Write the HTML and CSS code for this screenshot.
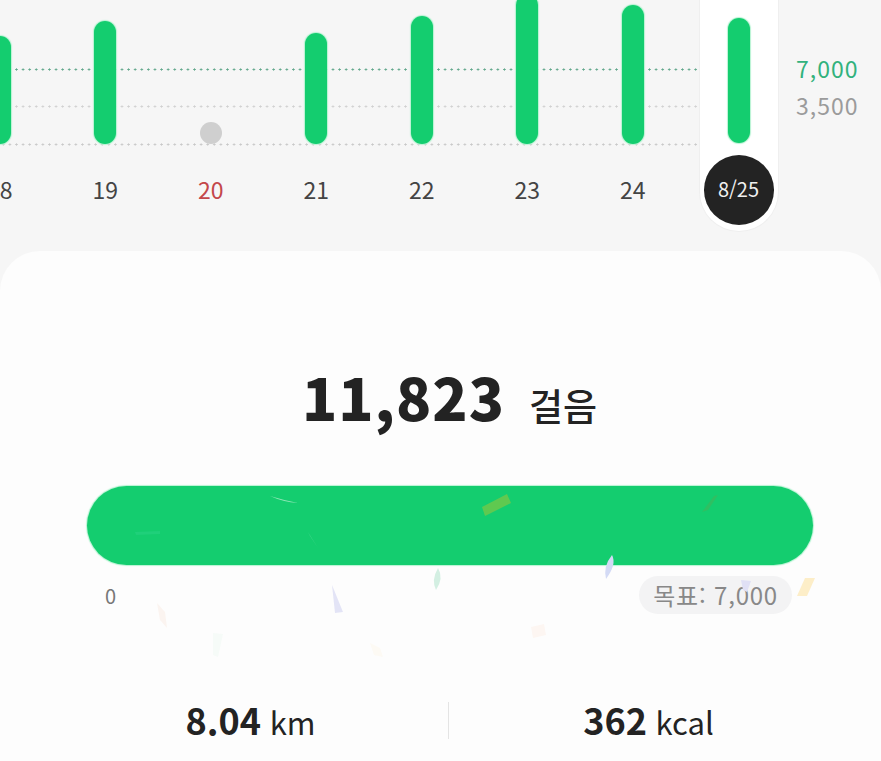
FILE: index.html
```html
<!DOCTYPE html>
<html lang="ko">
<head>
    <meta charset="utf-8" />
    <meta name="viewport" content="width=device-width,initial-scale=1.0" />
    <title>걸음</title>
    <link rel="stylesheet" href="styles.css">
</head>
<body>
    <div class="chart">
        <i class="line line-goal"></i>
        <i class="line line-half"></i>
        <i class="line line-base"></i>
        <div class="days">
            <div class="day"><div class="track"><b class="bar h108"></b></div><span class="date">18</span></div>
            <div class="day"><div class="track"><b class="bar h123"></b></div><span class="date">19</span></div>
            <div class="day"><div class="track"><b class="bar dot"></b></div><span class="date red">20</span></div>
            <div class="day"><div class="track"><b class="bar h111"></b></div><span class="date">21</span></div>
            <div class="day"><div class="track"><b class="bar h128"></b></div><span class="date">22</span></div>
            <div class="day"><div class="track"><b class="bar h150"></b></div><span class="date">23</span></div>
            <div class="day"><div class="track"><b class="bar h139"></b></div><span class="date">24</span></div>
            <div class="day today"><div class="track"><b class="bar h125"></b></div><span class="date">8/25</span></div>
        </div>
        <div class="scale">
            <span class="goal">7,000</span>
            <span>3,500</span>
        </div>
    </div>

    <div class="sheet">
        <h1 class="total"><strong>11,823</strong> <span>걸음</span></h1>
        <div class="progress"></div>
        <div class="limits">
            <span class="zero">0</span>
            <span class="target">목표: 7,000</span>
        </div>
        <div class="stats">
            <div class="stat"><strong>8.04</strong> km</div>
            <div class="stat stat-right"><strong>362</strong> kcal</div>
        </div>

        <!-- 축하 종이 조각 -->
        <svg class="confetti" viewBox="0 251 881 510" aria-hidden="true">
            <path d="M270 496Q283 502 298 503Q283 500 270 496Z" fill="#8fe6b6" />
            <path d="M135 532L160 531L160 534L136 535Z" fill="#1fd07a" />
            <path d="M308 532L318 548L310 536Z" fill="#45d78d" />
            <polygon points="482,507 507,494 511,503 485,516" fill="#5fc950" />
            <path d="M702 512L714 496L718 495L708 510Z" fill="#2fbf62" />
            <path d="M438 568Q444 578 436 590Q431 580 438 568Z" fill="#d3efe2" />
            <polygon points="332,585 343,612 335,613" fill="#e3e4f6" />
            <path d="M157 603L165 612L167 628L160 620Z" fill="#fbf4f0" />
            <path d="M213 633L223 634L218 657L213 655Z" fill="#f6fbf8" />
            <path d="M370 643L380 648L383 657L374 655Z" fill="#fdfaf4" />
            <path d="M612 555Q617 564 606 579Q603 566 612 555Z" fill="#d3daf5" />
            <polygon points="741,580 751,581 747,592 743,590" fill="#e0e0f5" />
            <polygon points="797,596 805,578 815,578 807,596" fill="#fdeec8" />
            <path d="M531 627L544 624L546 635L533 638Z" fill="#fdf6f2" />
        </svg>
    </div>
</body>
</html>
```

FILE: styles.css
```css
* {
    padding: 0;
    margin: 0;
    box-sizing: border-box;
}

html,
body {
    height: 100%;
    overflow: hidden;
}

body {
    background: #f6f6f6;
    font-family: "Noto Sans CJK KR", "Noto Sans", sans-serif;
    color: #232323;
}

.chart {
    position: relative;
    height: 251px;
    display: flex;
    overflow: hidden;
}

/* dotted guide lines behind the bars */
.line {
    position: absolute;
    left: 0;
    width: 698px;
    height: 3px;
    background-size: 6.6px 3px;
}

.line-goal {
    top: 68px;
    background-image: radial-gradient(circle, #5fa68a 0.9px, transparent 1.2px);
}

.line-half {
    top: 105px;
    background-image: radial-gradient(circle, #d0d0d0 0.9px, transparent 1.2px);
}

.line-base {
    top: 143px;
    background-image: radial-gradient(circle, #c8c8c8 0.9px, transparent 1.2px);
}

.days {
    display: flex;
    flex: none;
    width: 844px;
    margin-left: -53px;
}

.day {
    position: relative;
    flex: 0 0 105.5px;
    display: flex;
    flex-direction: column;
    align-items: center;
}

.track {
    height: 144px;
    display: flex;
    align-items: flex-end;
}

.bar {
    display: block;
    width: 22px;
    border-radius: 11px;
    background: #14cd6f;
    box-shadow: 0 0 1px 1px #b6f3d2;
}

.h108 { height: 108px; }
.h111 { height: 111px; }
.h123 { height: 123px; }
.h125 { height: 125px; }
.h128 { height: 128px; }
.h139 { height: 139px; }
.h150 { height: 150px; }

.bar.dot {
    height: 22px;
    background: #cfcfcf;
    box-shadow: none;
}

.date {
    margin-top: 30px;
    line-height: 30px;
    font-size: 23px;
    color: #444;
}

.date.red {
    color: #c4474a;
}

.day.today {
    flex: 0 0 80px;
    height: 232px;
    margin: 0 13px;
    padding-bottom: 6px;
    background: #fff;
    border: 1px solid #efefef;
    border-top: none;
    border-radius: 0 0 40px 40px;
}

.day.today .date {
    width: 70px;
    height: 70px;
    margin-top: 12px;
    border-radius: 50%;
    background: #232323;
    color: #f0f0f0;
    font-size: 20px;
    line-height: 68px;
    text-align: center;
}

.scale {
    display: flex;
    flex-direction: column;
    flex: none;
    margin-left: 5px;
    padding-top: 50px;
    font-size: 23px;
    letter-spacing: 1px;
    line-height: 37px;
    color: #9b9b9b;
}

.scale .goal {
    color: #32b27d;
}

.sheet {
    position: relative;
    height: 510px;
    padding-top: 105px;
    background: #fdfdfd;
    border-radius: 40px 40px 0 0;
}

.total {
    display: flex;
    justify-content: center;
    align-items: baseline;
    gap: 24px;
    height: 130px;
    padding-left: 18px;
    font-weight: 700;
    line-height: 80px;
}

.total strong {
    font-size: 58px;
    letter-spacing: 1px;
}

.total span {
    font-size: 37px;
    font-weight: 500;
}

.progress {
    height: 79px;
    margin: 0 68px 0 87px;
    border-radius: 40px;
    background: #14cd6f;
    box-shadow: 0 0 1px 1px #b6f3d2;
}

.limits {
    display: flex;
    justify-content: space-between;
    align-items: center;
    margin: 11px 89px 0 105px;
}

.zero {
    font-size: 20px;
    color: #777;
}

.target {
    padding: 0 14px;
    line-height: 38px;
    border-radius: 19px;
    background: #f3f3f4;
    font-size: 24px;
    letter-spacing: 0.8px;
    color: #888;
}

.stats {
    display: flex;
    margin: 88px 33px 0 53px;
}

.stat {
    flex: 0 0 395px;
    text-align: center;
    font-size: 31px;
    line-height: 34px;
}

.stat strong {
    font-size: 36px;
    font-weight: 700;
}

.stat-right {
    flex: 1;
    border-left: 1px solid #e4e4e4;
}

.confetti {
    position: absolute;
    left: 0;
    top: 0;
    width: 881px;
    height: 510px;
    pointer-events: none;
}
```
